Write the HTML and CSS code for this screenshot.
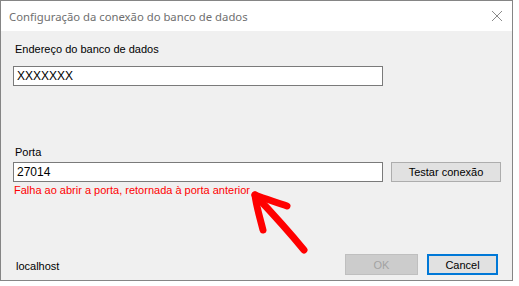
FILE: index.html
```html
<!DOCTYPE html>
<html lang="pt">
<head>
    <meta charset="UTF-8">
    <title>Configuração da conexão do banco de dados</title>
    <link rel="stylesheet" href="styles.css">
</head>
<body>
    <div class="window">
        <!-- Title bar -->
        <div class="titlebar">
            <span class="title">Configuração da conexão do banco de dados</span>
            <svg class="close" width="12" height="12" viewBox="0 0 12 12">
                <path d="M1 1 L11 11 M11 1 L1 11" stroke="#8a8a8a" stroke-width="1" fill="none"/>
            </svg>
        </div>

        <!-- Client area -->
        <div class="client">
            <label class="label first">Endereço do banco de dados</label>
            <div class="row">
                <div class="field">XXXXXXX</div>
            </div>

            <label class="label port">Porta</label>
            <div class="row">
                <div class="field">27014</div>
                <button class="btn test">Testar conexão</button>
            </div>
            <p class="error">Falha ao abrir a porta, retornada à porta anterior</p>

            <div class="footer">
                <span class="host">localhost</span>
                <div class="actions">
                    <button class="btn ok" disabled>OK</button>
                    <button class="btn cancel">Cancel</button>
                </div>
            </div>
        </div>
    </div>

    <!-- Red annotation arrow -->
    <svg class="arrow" width="519" height="286" viewBox="0 0 519 286">
        <path d="M304 250 C290 233 272 213 255 195" stroke="#ff0000" stroke-width="7" fill="none" stroke-linecap="round"/>
        <path d="M263 230 C260 218 256 205 255 195 C265 199 276 202 287 206" stroke="#ff0000" stroke-width="7" fill="none" stroke-linecap="round" stroke-linejoin="round"/>
    </svg>
</body>
</html>
```

FILE: styles.css
```css
* {
    margin: 0;
    padding: 0;
    box-sizing: border-box;
}

body {
    background: #fff;
    font-family: "Liberation Sans", Arial, sans-serif;
    font-size: 11px;
    color: #000;
    width: 519px;
    height: 286px;
    position: relative;
    overflow: hidden;
}

/* Window frame */
.window {
    width: 513px;
    height: 281px;
    border: 1px solid #858585;
    display: flex;
    flex-direction: column;
}

.titlebar {
    height: 30px;
    background: #fff;
    display: flex;
    align-items: center;
    justify-content: space-between;
    padding: 0 9px 0 8px;
}

.title {
    font-family: "Noto Sans", "Open Sans", sans-serif;
    font-size: 11.3px;
    color: #6f6f6f;
}

.client {
    flex: 1;
    background: #f0f0f0;
    padding: 12px 11px 5px 12px;
    display: flex;
    flex-direction: column;
}

.label {
    display: block;
    line-height: 13px;
    margin-left: 2px;
}

.label.first {
    margin-bottom: 10px;
}

.label.port {
    margin-top: 60px;
    margin-bottom: 3px;
}

.row {
    display: flex;
    align-items: center;
    gap: 8px;
}

.field {
    width: 370px;
    height: 20px;
    background: #fff;
    border: 1px solid #7a7a7a;
    padding: 0 3px;
    font-size: 12px;
    line-height: 18px;
}

.btn {
    font-family: "Liberation Sans", Arial, sans-serif;
    font-size: 11px;
    background: #e1e1e1;
    border: 1px solid #adadad;
    color: #000;
}

.btn.test {
    width: 110px;
    height: 20px;
}

.error {
    color: #ff0000;
    line-height: 13px;
    margin-top: 2px;
    margin-left: 1px;
}

.footer {
    margin-top: auto;
    display: flex;
    align-items: center;
    justify-content: space-between;
}

.host {
    margin-left: 3px;
    margin-top: 3px;
}

.actions {
    display: flex;
    gap: 9px;
    margin-right: 3px;
}

.btn.ok {
    width: 73px;
    height: 21px;
    background: #cccccc;
    border-color: #bfbfbf;
    color: #a3a3a3;
}

.btn.cancel {
    width: 71px;
    height: 21px;
    border: 2px solid #0078d7;
}

.arrow {
    position: absolute;
    left: 0;
    top: 0;
    pointer-events: none;
}
```
